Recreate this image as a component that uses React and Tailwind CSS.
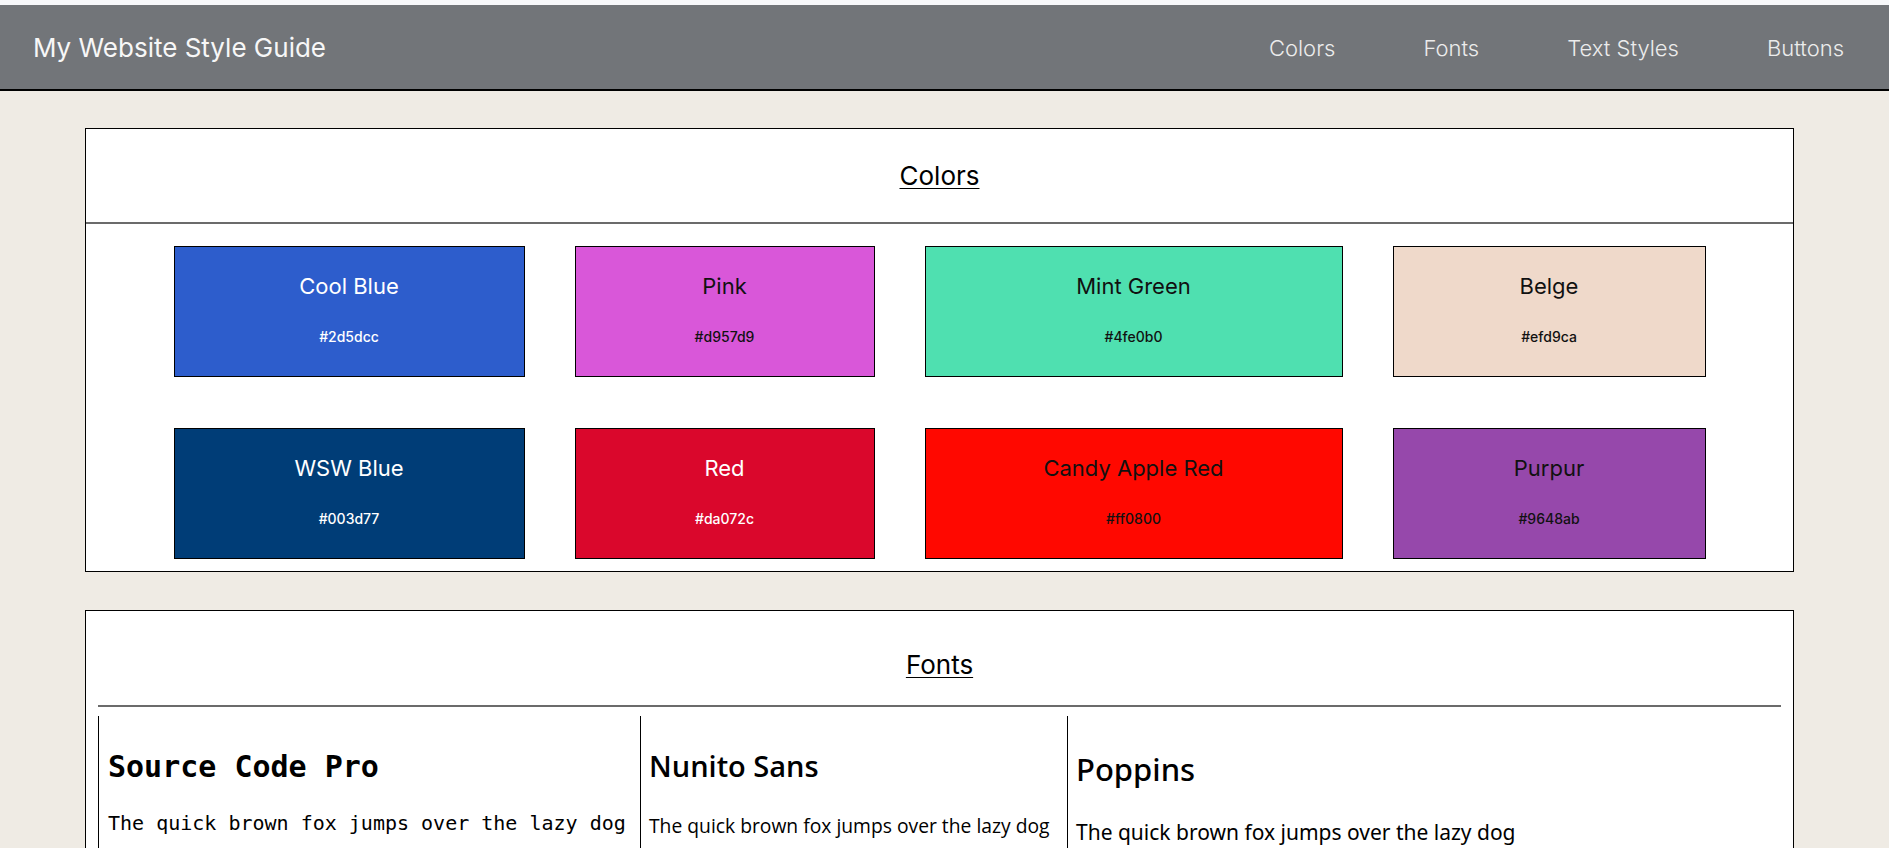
const swatches = [
    { name: 'Cool Blue', hex: '#2d5dcc', bg: 'bg-[#2d5dcc]', text: 'text-white' },
    { name: 'Pink', hex: '#d957d9', bg: 'bg-[#d957d9]', text: 'text-[#111]' },
    { name: 'Mint Green', hex: '#4fe0b0', bg: 'bg-[#4fe0b0]', text: 'text-[#111]' },
    { name: 'Belge', hex: '#efd9ca', bg: 'bg-[#efd9ca]', text: 'text-[#111]' },
    { name: 'WSW Blue', hex: '#003d77', bg: 'bg-[#003d77]', text: 'text-white' },
    { name: 'Red', hex: '#da072c', bg: 'bg-[#da072c]', text: 'text-white' },
    { name: 'Candy Apple Red', hex: '#ff0800', bg: 'bg-[#ff0800]', text: 'text-[#111]' },
    { name: 'Purpur', hex: '#9648ab', bg: 'bg-[#9648ab]', text: 'text-[#111]' },
];

const navLinks = ['Colors', 'Fonts', 'Text Styles', 'Buttons'];

function Swatch({ swatch }) {
    return (
        <div className={`h-[131px] border border-black flex flex-col items-center pt-[26px] ${swatch.bg} ${swatch.text}`}>
            <span className="text-[22px] leading-[26px]">{swatch.name}</span>
            <span className="mt-[29px] text-[14px] leading-[17px] font-medium">{swatch.hex}</span>
        </div>
    );
}

export default function App() {
    return (
        <div className="h-screen overflow-hidden bg-[#efebe4] font-['Inter',sans-serif] text-black">
            <div className="h-[5px] bg-[#f7f8fa]" />
            <header className="h-[86px] bg-[#727579] border-b-2 border-black flex items-center justify-between pl-[33px] pr-[45px]">
                <h1 className="text-[26px] text-[#f7f7f7]">My Website Style Guide</h1>
                <nav className="flex gap-[88px] pt-[3px]">
                    {navLinks.map((link) => (
                        <a key={link} href="#" className="text-[22px] font-light text-[#ececec]">
                            {link}
                        </a>
                    ))}
                </nav>
            </header>

            <main className="pl-[85px] pr-[95px] pt-[37px] flex flex-col gap-[38px]">
                {/* Colors */}
                <section className="bg-white border border-black">
                    <div className="h-[93px] flex items-center justify-center">
                        <h2 className="text-[26px] underline underline-offset-[3px] decoration-1">Colors</h2>
                    </div>
                    <div className="border-t-2 border-[#6b6b6b]" />
                    <div className="pt-[22px] pb-[12px] grid grid-cols-[351px_300px_418px_313px] gap-x-[50px] gap-y-[51px] justify-center">
                        {swatches.map((s) => (
                            <Swatch key={s.name} swatch={s} />
                        ))}
                    </div>
                </section>

                {/* Fonts */}
                <section className="bg-white border border-black">
                    <div className="h-[94px] pt-[12px] flex items-center justify-center">
                        <h2 className="text-[26px] underline underline-offset-[3px] decoration-1">Fonts</h2>
                    </div>
                    <div className="mx-[12px] border-t-2 border-[#6b6b6b]" />
                    <div className="mx-[12px] mt-[9px] flex">
                        <div className="w-[542px] border-l border-black pl-[9px] pt-[33px] pb-[80px] font-['DejaVu_Sans_Mono',monospace]">
                            <h3 className="text-[30px] leading-[36px] font-bold">Source Code Pro</h3>
                            <p className="mt-[26px] text-[20px] leading-[24px]">The quick brown fox jumps over the lazy dog</p>
                        </div>
                        <div className="w-[427px] border-l border-black pl-[8px] pt-[33px] pb-[80px] font-['Open_Sans',sans-serif]">
                            <h3 className="text-[29px] leading-[34px] font-semibold">Nunito Sans</h3>
                            <p className="mt-[31px] text-[19.3px] leading-[24px]">The quick brown fox jumps over the lazy dog</p>
                        </div>
                        <div className="flex-1 border-l border-black pl-[8px] pt-[35px] pb-[80px] font-['Noto_Sans',sans-serif]">
                            <h3 className="text-[31px] leading-[37px] font-medium">Poppins</h3>
                            <p className="mt-[32px] text-[21px] leading-[25px]">The quick brown fox jumps over the lazy dog</p>
                        </div>
                    </div>
                </section>
            </main>
        </div>
    );
}
